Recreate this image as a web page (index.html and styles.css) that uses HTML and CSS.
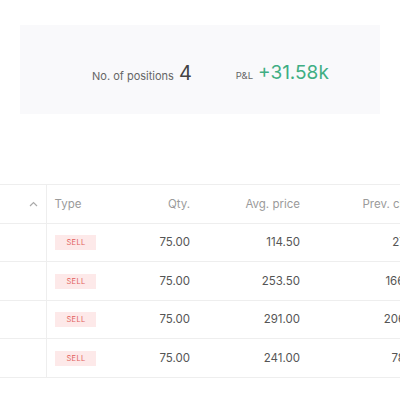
FILE: index.html
```html
<!DOCTYPE html>
<html>
<head>
<meta charset="utf-8">
<link rel="stylesheet" href="styles.css">
</head>
<body>
<div class="summary-wrap">
  <div class="summary">
    <div class="stat">
      <span class="label">No. of positions</span>
      <span class="value">4</span>
    </div>
    <div class="stat">
      <span class="label small">P&amp;L</span>
      <span class="value green">+31.58k</span>
    </div>
  </div>
</div>
<div class="table-wrap">
  <table class="positions">
    <colgroup>
      <col class="c-inst"><col class="c-type"><col class="c-qty"><col class="c-avg"><col class="c-prev">
    </colgroup>
    <thead>
      <tr>
        <th class="inst"><svg class="caret" width="9" height="6" viewBox="0 0 9 6"><path d="M1 5 L4.5 1.5 L8 5" fill="none" stroke="#aaa" stroke-width="1.2"/></svg></th>
        <th class="left">Type</th>
        <th>Qty.</th>
        <th>Avg. price</th>
        <th>Prev. close</th>
      </tr>
    </thead>
    <tbody>
      <tr><td class="inst"></td><td class="left"><span class="badge">SELL</span></td><td>75.00</td><td>114.50</td><td>27.90</td></tr>
      <tr><td class="inst"></td><td class="left"><span class="badge">SELL</span></td><td>75.00</td><td>253.50</td><td>166.40</td></tr>
      <tr><td class="inst"></td><td class="left"><span class="badge">SELL</span></td><td>75.00</td><td>291.00</td><td>206.65</td></tr>
      <tr><td class="inst"></td><td class="left"><span class="badge">SELL</span></td><td>75.00</td><td>241.00</td><td>78.25</td></tr>
    </tbody>
  </table>
</div>
</body>
</html>
```
FILE: styles.css
```css
html, body {
  margin: 0;
  padding: 0;
  background: #fff;
  font-family: Inter, "Noto Sans", sans-serif;
  color: #444;
}
.summary-wrap {
  padding: 25px 20px 0 20px;
}
.summary {
  height: 89px;
  background: #f9f9fb;
  display: flex;
  align-items: center;
  padding-left: 72px;
  gap: 44px;
  box-sizing: border-box;
  padding-top: 6px;
}
.stat {
  display: flex;
  align-items: baseline;
  gap: 5px;
}
.label {
  font-size: 11px;
  color: #666;
}
.label.small {
  font-size: 9.5px;
}
.value {
  font-size: 20px;
  color: #444;
}
.value.green {
  font-size: 19px;
  color: #3fae83;
}
.table-wrap {
  margin-top: 70px;
  width: 400px;
  overflow: hidden;
}
.positions {
  width: 432px;
  table-layout: fixed;
  border-collapse: collapse;
  font-size: 11.5px;
}
.c-inst { width: 46px; }
.c-type { width: 74px; }
.c-qty { width: 80px; }
.c-avg { width: 110px; }
.c-prev { width: 122px; }
.positions th, .positions td {
  height: 37.5px;
  padding: 0 10px;
  text-align: right;
  border-bottom: 1px solid #eee;
  white-space: nowrap;
}
.positions td {
  color: #555;
}
.positions thead tr {
  border-top: 1px solid #eee;
}
.positions th {
  font-weight: normal;
  color: #9b9b9b;
}
.positions .left {
  text-align: left;
  padding-left: 8px;
}
.positions .inst {
  border-right: 1px solid #eee;
  padding: 0 8px 0 0;
}
.caret {
  display: block;
  margin-left: auto;
}
.badge {
  display: inline-block;
  background: #fde9e9;
  color: #e25f5b;
  font-size: 7.5px;
  letter-spacing: 0.3px;
  width: 41px;
  height: 15px;
  line-height: 15px;
  padding-left: 12px;
  box-sizing: border-box;
}
```
